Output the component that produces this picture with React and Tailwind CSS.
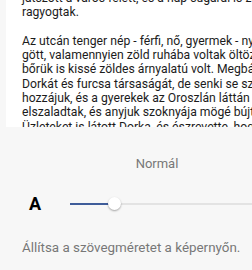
export default function App() {
  const lines = [
    "játszott a város felett, és a nap sugarai is zölden",
    "ragyogtak.",
    "\u00a0",
    "Az utcán tenger nép - férfi, nő, gyermek - nyüzs-",
    "gött, valamennyien zöld ruhába voltak öltözve, és",
    "bőrük is kissé zöldes árnyalatú volt. Megbámulták",
    "Dorkát és furcsa társaságát, de senki se szólt",
    "hozzájuk, és a gyerekek az Oroszlán láttán",
    "elszaladtak, és anyjuk szoknyája mögé bújtak.",
    "Üzleteket is látott Dorka, és észrevette, hogy",
  ];
  return (
    <div
      className="w-[252px] h-[270px] overflow-hidden bg-[#f7f7f7] flex flex-col"
      style={{ fontFamily: "Roboto, 'Noto Sans', sans-serif" }}
    >
      <div className="ml-[6px] h-[127px] shrink-0 overflow-hidden bg-white">
        <div className="-mt-[9px] pl-[16px] text-[12.2px] leading-[14.3px] text-[#1c1c1c]">
          {lines.map((l, i) => (
            <div key={i} className="whitespace-nowrap">
              {l}
            </div>
          ))}
        </div>
      </div>
      <div className="mt-[29px] ml-[62px] h-[16px] text-center text-[13px] leading-[16px] text-[#777777]">
        Normál
      </div>
      <div className="mt-[22px] h-[20px] flex items-center">
        <div className="pl-[29px] w-[70px] text-[18px] font-bold leading-[20px] text-black">
          A
        </div>
        <div className="relative flex-1 h-[20px] flex items-center">
          <div className="h-[2px] w-[45px] bg-[#3f5d9a]" />
          <div className="h-[2px] flex-1 bg-[#e3e3e3]" />
          <div className="absolute left-[38px] top-[3px] w-[13px] h-[13px] rounded-full bg-white shadow-[0_1px_2px_rgba(0,0,0,0.35)]" />
        </div>
      </div>
      <div className="mt-[26px] pl-[22px] h-[16px] whitespace-nowrap text-[13.4px] leading-[16px] text-[#777777]">
        Állítsa a szövegméretet a képernyőn.
      </div>
    </div>
  );
}
